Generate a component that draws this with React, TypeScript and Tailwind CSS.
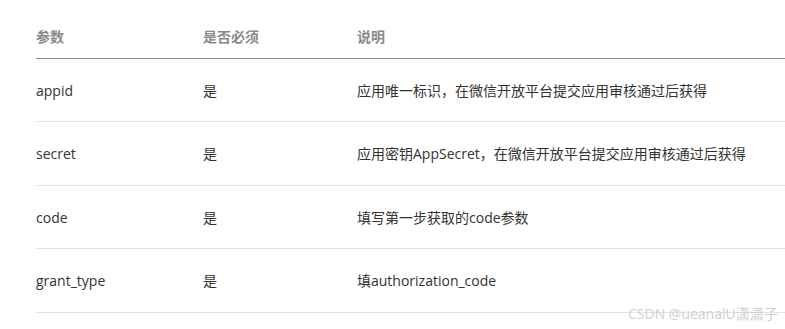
const rows = [
  { name: 'appid', required: '是', desc: '应用唯一标识，在微信开放平台提交应用审核通过后获得', h: 'h-[63px]' },
  { name: 'secret', required: '是', desc: '应用密钥AppSecret，在微信开放平台提交应用审核通过后获得', h: 'h-[64px]' },
  { name: 'code', required: '是', desc: '填写第一步获取的code参数', h: 'h-[63px]' },
  { name: 'grant_type', required: '是', desc: '填authorization_code', h: 'h-[64px]' },
]

export default function App() {
  return (
    <div
      className="relative h-[329px] w-[785px] overflow-hidden bg-white pl-[36px] text-[14px]"
      style={{ fontFamily: '"Open Sans", "Noto Sans CJK SC", sans-serif' }}
    >
      <div className="flex h-[59px] items-end border-b border-[#8c8c8c] pb-[11px] font-bold leading-[20px] text-[#8a8a8a]">
        <div className="w-[167px]">参数</div>
        <div className="w-[154px]">是否必须</div>
        <div>说明</div>
      </div>
      {rows.map((r) => (
        <div key={r.name} className={`flex items-center border-b border-[#e4e4e4] text-[#333] ${r.h}`}>
          <div className="w-[167px]">{r.name}</div>
          <div className="w-[154px]">{r.required}</div>
          <div>{r.desc}</div>
        </div>
      ))}
      <div className="absolute left-[628px] top-[304px] text-[14px] leading-[20px] text-[#cfcfcf]">
        CSDN @ueanalU潇潇子
      </div>
    </div>
  )
}
